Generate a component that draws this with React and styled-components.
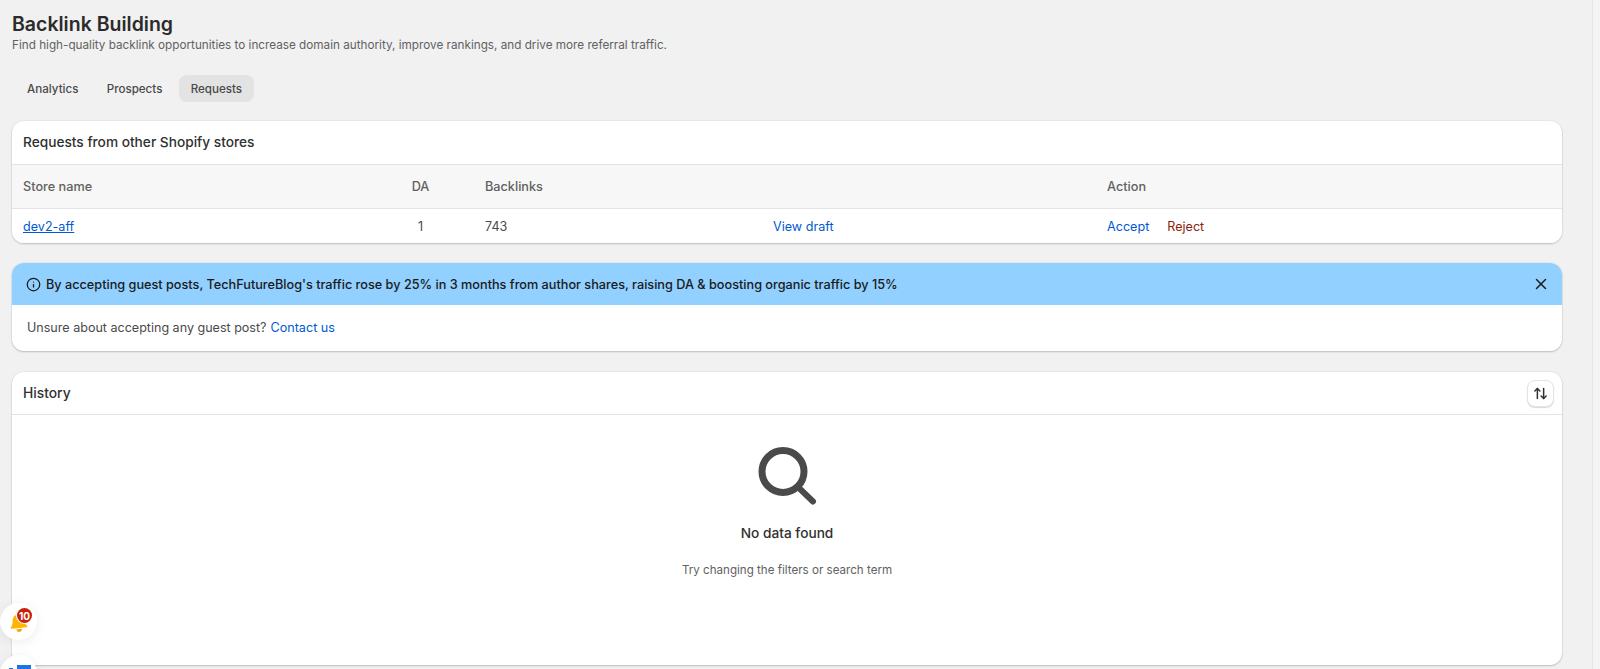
import React from 'react';
import styled, { createGlobalStyle } from 'styled-components';
import { ArrowUpDown, X, Info } from 'lucide-react';

const GlobalStyle = createGlobalStyle`
  html, body {
    margin: 0;
    padding: 0;
    height: 100%;
    overflow: hidden;
    background: #f1f1f1;
    font-family: Inter, "Noto Sans", sans-serif;
    -webkit-font-smoothing: antialiased;
  }
`;

const Page = styled.div`
  position: relative;
  width: 1600px;
  height: 669px;
  box-sizing: border-box;
  overflow: hidden;
  border-right: 7px solid #f4f4f4;
`;

const ScrollLine = styled.div`
  position: absolute;
  top: 0;
  right: 0;
  bottom: 0;
  width: 1px;
  background: #e6e6e6;
`;

const Main = styled.main`
  display: flex;
  flex-direction: column;
  width: 1550px;
  padding: 14px 0 0 12px;
`;

const Title = styled.h1`
  margin: 0;
  font-size: 19.5px;
  line-height: 20px;
  font-weight: 600;
  color: #2b2b2b;
`;

const Subtitle = styled.p`
  margin: 2px 0 0;
  font-size: 11.72px;
  line-height: 18px;
  color: #616161;
`;

const Tabs = styled.div`
  display: flex;
  gap: 4.25px;
  margin: 21px 0 0 3px;
`;

const Tab = styled.div`
  height: 27px;
  padding: 0 12px;
  display: flex;
  align-items: center;
  border-radius: 8px;
  font-size: 11.6px;
  font-weight: 500;
  color: #4a4a4a;
  background: ${props => (props.$active ? '#e3e3e3' : 'transparent')};
`;

const Card = styled.section`
  margin-top: ${props => props.$top || 20}px;
  background: #fff;
  border-radius: 12px;
  overflow: hidden;
  box-shadow: 0 1px 2px rgba(0, 0, 0, 0.2), 0 0 0 1px rgba(0, 0, 0, 0.03);
`;

const CardHead = styled.div`
  height: 42px;
  box-sizing: content-box;
  padding: 0 8px ${props => props.$bottom || 0}px 11px;
  display: flex;
  align-items: center;
  justify-content: space-between;
  border-bottom: 1px solid #e3e3e3;
  font-size: ${props => props.$size || 13.7}px;
  font-weight: ${props => props.$weight || 500};
  color: #303030;
`;

const TableRow = styled.div`
  display: grid;
  grid-template-columns: 388px 74px 288px 334px 1fr;
  align-items: center;
  padding: 0 11px;
  height: ${props => (props.$head ? 43 : 34)}px;
  background: ${props => (props.$head ? '#f7f7f7' : '#fff')};
  border-bottom: ${props => (props.$head ? '1px solid #e3e3e3' : 'none')};
  font-size: ${props => (props.$head ? 12.7 : 12.6)}px;
  font-weight: ${props => (props.$head ? 550 : 400)};
  color: ${props => (props.$head ? '#616161' : '#4a4a4a')};
`;

const DaCell = styled.div`
  width: 19px;
  text-align: center;
`;

const Actions = styled.div`
  display: flex;
  gap: 18px;
`;

const TextLink = styled.a`
  font-size: 12.6px;
  color: ${props => props.$color || '#005bd3'};
  text-decoration: ${props => (props.$underline ? 'underline' : 'none')};
`;

const BannerHead = styled.div`
  height: 42px;
  padding: 0 12px 0 14px;
  display: flex;
  align-items: center;
  gap: 5px;
  background: #91d0ff;
  font-size: 12.69px;
  font-weight: 550;
  color: #1a1a1a;
`;

const BannerText = styled.div`
  flex: 1;
`;

const BannerBody = styled.div`
  height: 46px;
  padding: 0 15px 2px;
  box-sizing: border-box;
  display: flex;
  align-items: center;
  gap: 4px;
  font-size: 12.55px;
  color: #4a4a4a;
`;

const SortButton = styled.button`
  width: 27px;
  height: 27px;
  padding: 0;
  display: flex;
  align-items: center;
  justify-content: center;
  background: #fff;
  color: #303030;
  border: 1px solid #e3e3e3;
  border-radius: 8px;
  box-shadow: 0 1px 1px rgba(0, 0, 0, 0.15);
`;

const Empty = styled.div`
  height: 250px;
  display: flex;
  flex-direction: column;
  align-items: center;
  padding-top: 30px;
  box-sizing: border-box;
`;

const EmptyTitle = styled.div`
  margin-top: 20px;
  font-size: 13.7px;
  font-weight: 500;
  color: #303030;
`;

const EmptyText = styled.div`
  margin-top: 22px;
  font-size: 11.6px;
  color: #616161;
`;

const Floating = styled.div`
  position: absolute;
  left: 0;
  top: ${props => props.$top}px;
  width: 37px;
  height: 37px;
  border-radius: 50%;
  background: #fff;
  box-shadow: 0 2px 12px rgba(0, 0, 0, 0.08);
`;

const Badge = styled.span`
  position: absolute;
  left: 17px;
  top: 5px;
  width: 15px;
  height: 15px;
  border-radius: 50%;
  background: #c9210b;
  box-shadow: 0 0 0 1px #fff;
  color: #fff;
  font-size: 10px;
  font-weight: 700;
  display: flex;
  align-items: center;
  justify-content: center;
`;

const BellSvg = styled.svg`
  position: absolute;
  left: 9px;
  top: 9px;
  transform: rotate(-6deg);
`;

const AppSvg = styled.svg`
  position: absolute;
  left: 8px;
  top: 10px;
`;

const BellIcon = () => (
  <BellSvg width="19" height="21" viewBox="0 0 20 22">
    <path d="M10 1c-1 0-1.8.8-1.8 1.8C5.6 3.6 4.2 6 4 9c-.2 3-1 4.8-2.6 6.2-.6.6-.2 1.6.6 1.6h16c.8 0 1.2-1 .6-1.6C17 13.8 16.2 12 16 9c-.2-3-1.6-5.4-4.2-6.2C11.8 1.8 11 1 10 1z" fill="#ffb400" />
    <path d="M7 18h6c0 1.7-1.3 3-3 3s-3-1.3-3-3z" fill="#ff9f00" />
  </BellSvg>
);

const SearchIcon = () => (
  <svg width="60" height="60" viewBox="0 0 60 60">
    <circle cx="26" cy="26.5" r="21" fill="none" stroke="#4a4a4a" strokeWidth="7" />
    <path d="M42 43l14 13.500" stroke="#4a4a4a" strokeWidth="6" strokeLinecap="round" />
  </svg>
);

const AppIcon = () => (
  <AppSvg width="24" height="12" viewBox="0 0 24 12">
    <rect x="9" y="0" width="14" height="12" fill="#1a73e8" />
    <rect x="1" y="3" width="4" height="9" fill="#1a73e8" />
  </AppSvg>
);

export default function App() {
  return (
    <>
      <GlobalStyle />
      <Page>
        <Main>
          <Title>Backlink Building</Title>
          <Subtitle>Find high-quality backlink opportunities to increase domain authority, improve rankings, and drive more referral traffic.</Subtitle>
          <Tabs>
            <Tab>Analytics</Tab>
            <Tab>Prospects</Tab>
            <Tab $active>Requests</Tab>
          </Tabs>

          <Card $top={19}>
            <CardHead $bottom={1}>Requests from other Shopify stores</CardHead>
            <TableRow $head>
              <div>Store name</div>
              <DaCell>DA</DaCell>
              <div>Backlinks</div>
              <div />
              <div>Action</div>
            </TableRow>
            <TableRow>
              <TextLink $underline href="#">dev2-aff</TextLink>
              <DaCell>1</DaCell>
              <div>743</div>
              <TextLink href="#">View draft</TextLink>
              <Actions>
                <TextLink href="#">Accept</TextLink>
                <TextLink $color="#8e1f0b" href="#">Reject</TextLink>
              </Actions>
            </TableRow>
          </Card>

          <Card $top={20}>
            <BannerHead>
              <Info size={15} color="#1a1a1a" />
              <BannerText>By accepting guest posts, TechFutureBlog's traffic rose by 25% in 3 months from author shares, raising DA &amp; boosting organic traffic by 15%</BannerText>
              <X size={18} color="#1a1a1a" />
            </BannerHead>
            <BannerBody>
              Unsure about accepting any guest post? <TextLink href="#">Contact us</TextLink>
            </BannerBody>
          </Card>

          <Card $top={21}>
            <CardHead $weight={550} $size={13.8}>
              History
              <SortButton><ArrowUpDown size={15} strokeWidth={2.4} /></SortButton>
            </CardHead>
            <Empty>
              <SearchIcon />
              <EmptyTitle>No data found</EmptyTitle>
              <EmptyText>Try changing the filters or search term</EmptyText>
            </Empty>
          </Card>
        </Main>
        <ScrollLine />
        <Floating $top={603}>
          <BellIcon />
          <Badge>10</Badge>
        </Floating>
        <Floating $top={655}>
          <AppIcon />
        </Floating>
      </Page>
    </>
  );
}
